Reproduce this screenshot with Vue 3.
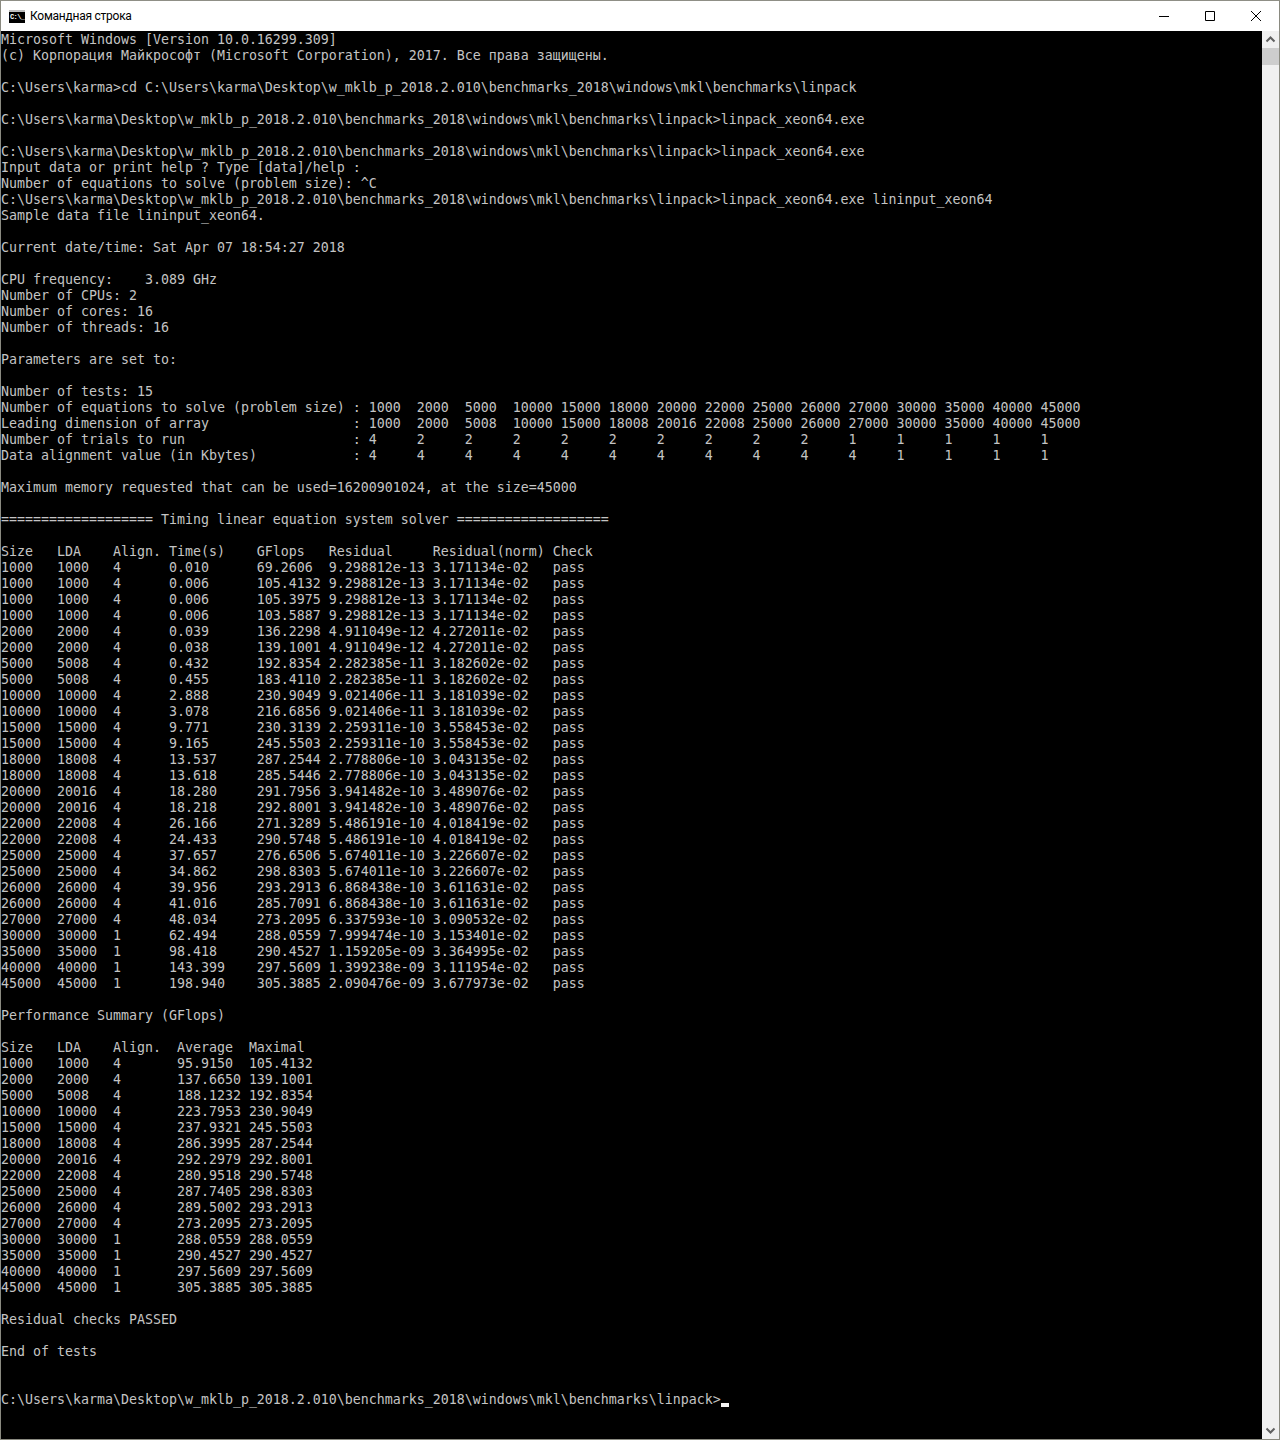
<script setup>
const promptPath = String.raw`C:\Users\karma\Desktop\w_mklb_p_2018.2.010\benchmarks_2018\windows\mkl\benchmarks\linpack>`

const tests = [
  ['1000', '1000', '4', '0.010', '69.2606', '9.298812e-13', '3.171134e-02'],
  ['1000', '1000', '4', '0.006', '105.4132', '9.298812e-13', '3.171134e-02'],
  ['1000', '1000', '4', '0.006', '105.3975', '9.298812e-13', '3.171134e-02'],
  ['1000', '1000', '4', '0.006', '103.5887', '9.298812e-13', '3.171134e-02'],
  ['2000', '2000', '4', '0.039', '136.2298', '4.911049e-12', '4.272011e-02'],
  ['2000', '2000', '4', '0.038', '139.1001', '4.911049e-12', '4.272011e-02'],
  ['5000', '5008', '4', '0.432', '192.8354', '2.282385e-11', '3.182602e-02'],
  ['5000', '5008', '4', '0.455', '183.4110', '2.282385e-11', '3.182602e-02'],
  ['10000', '10000', '4', '2.888', '230.9049', '9.021406e-11', '3.181039e-02'],
  ['10000', '10000', '4', '3.078', '216.6856', '9.021406e-11', '3.181039e-02'],
  ['15000', '15000', '4', '9.771', '230.3139', '2.259311e-10', '3.558453e-02'],
  ['15000', '15000', '4', '9.165', '245.5503', '2.259311e-10', '3.558453e-02'],
  ['18000', '18008', '4', '13.537', '287.2544', '2.778806e-10', '3.043135e-02'],
  ['18000', '18008', '4', '13.618', '285.5446', '2.778806e-10', '3.043135e-02'],
  ['20000', '20016', '4', '18.280', '291.7956', '3.941482e-10', '3.489076e-02'],
  ['20000', '20016', '4', '18.218', '292.8001', '3.941482e-10', '3.489076e-02'],
  ['22000', '22008', '4', '26.166', '271.3289', '5.486191e-10', '4.018419e-02'],
  ['22000', '22008', '4', '24.433', '290.5748', '5.486191e-10', '4.018419e-02'],
  ['25000', '25000', '4', '37.657', '276.6506', '5.674011e-10', '3.226607e-02'],
  ['25000', '25000', '4', '34.862', '298.8303', '5.674011e-10', '3.226607e-02'],
  ['26000', '26000', '4', '39.956', '293.2913', '6.868438e-10', '3.611631e-02'],
  ['26000', '26000', '4', '41.016', '285.7091', '6.868438e-10', '3.611631e-02'],
  ['27000', '27000', '4', '48.034', '273.2095', '6.337593e-10', '3.090532e-02'],
  ['30000', '30000', '1', '62.494', '288.0559', '7.999474e-10', '3.153401e-02'],
  ['35000', '35000', '1', '98.418', '290.4527', '1.159205e-09', '3.364995e-02'],
  ['40000', '40000', '1', '143.399', '297.5609', '1.399238e-09', '3.111954e-02'],
  ['45000', '45000', '1', '198.940', '305.3885', '2.090476e-09', '3.677973e-02'],
]

const summary = [
  ['1000', '1000', '4', '95.9150', '105.4132'],
  ['2000', '2000', '4', '137.6650', '139.1001'],
  ['5000', '5008', '4', '188.1232', '192.8354'],
  ['10000', '10000', '4', '223.7953', '230.9049'],
  ['15000', '15000', '4', '237.9321', '245.5503'],
  ['18000', '18008', '4', '286.3995', '287.2544'],
  ['20000', '20016', '4', '292.2979', '292.8001'],
  ['22000', '22008', '4', '280.9518', '290.5748'],
  ['25000', '25000', '4', '287.7405', '298.8303'],
  ['26000', '26000', '4', '289.5002', '293.2913'],
  ['27000', '27000', '4', '273.2095', '273.2095'],
  ['30000', '30000', '1', '288.0559', '288.0559'],
  ['35000', '35000', '1', '290.4527', '290.4527'],
  ['40000', '40000', '1', '297.5609', '297.5609'],
  ['45000', '45000', '1', '305.3885', '305.3885'],
]

const row = (cells, widths) =>
  cells.map((c, i) => (i < widths.length ? c.padEnd(widths[i]) : c)).join('')

const testWidths = [7, 7, 7, 11, 9, 13, 15]
const summaryWidths = [7, 7, 8, 9]

const output = [
  'Microsoft Windows [Version 10.0.16299.309]',
  '(c) Корпорация Майкрософт (Microsoft Corporation), 2017. Все права защищены.',
  '',
  String.raw`C:\Users\karma>cd C:\Users\karma\Desktop\w_mklb_p_2018.2.010\benchmarks_2018\windows\mkl\benchmarks\linpack`,
  '',
  promptPath + 'linpack_xeon64.exe',
  '',
  promptPath + 'linpack_xeon64.exe',
  'Input data or print help ? Type [data]/help :',
  'Number of equations to solve (problem size): ^C',
  promptPath + 'linpack_xeon64.exe lininput_xeon64',
  'Sample data file lininput_xeon64.',
  '',
  'Current date/time: Sat Apr 07 18:54:27 2018',
  '',
  'CPU frequency:    3.089 GHz',
  'Number of CPUs: 2',
  'Number of cores: 16',
  'Number of threads: 16',
  '',
  'Parameters are set to:',
  '',
  'Number of tests: 15',
  'Number of equations to solve (problem size) : 1000  2000  5000  10000 15000 18000 20000 22000 25000 26000 27000 30000 35000 40000 45000',
  'Leading dimension of array                  : 1000  2000  5008  10000 15000 18008 20016 22008 25000 26000 27000 30000 35000 40000 45000',
  'Number of trials to run                     : 4     2     2     2     2     2     2     2     2     2     1     1     1     1     1',
  'Data alignment value (in Kbytes)            : 4     4     4     4     4     4     4     4     4     4     4     1     1     1     1',
  '',
  'Maximum memory requested that can be used=16200901024, at the size=45000',
  '',
  '=================== Timing linear equation system solver ===================',
  '',
  row(['Size', 'LDA', 'Align.', 'Time(s)', 'GFlops', 'Residual', 'Residual(norm)', 'Check'], testWidths),
  ...tests.map((t) => row([...t, 'pass'], testWidths)),
  '',
  'Performance Summary (GFlops)',
  '',
  row(['Size', 'LDA', 'Align.', 'Average', 'Maximal'], summaryWidths),
  ...summary.map((s) => row(s, summaryWidths)),
  '',
  'Residual checks PASSED',
  '',
  'End of tests',
  '',
  '',
  promptPath,
].join('\n')
</script>

<template>
  <div class="window">
    <header class="titlebar">
      <div class="app-icon"><span class="app-icon-text">C:\_</span></div>
      <span class="title">Командная строка</span>
      <div class="controls">
        <svg class="ctl" width="46" height="30" viewBox="0 0 46 30"><path d="M18 15.5h10" stroke="#000" fill="none" /></svg>
        <svg class="ctl" width="46" height="30" viewBox="0 0 46 30"><path d="M18.5 10.5h9v9h-9z" stroke="#000" fill="none" /></svg>
        <svg class="ctl" width="46" height="30" viewBox="0 0 46 30"><path d="M18 10l10 10M28 10l-10 10" stroke="#000" fill="none" /></svg>
      </div>
    </header>
    <div class="body">
      <pre class="console">{{ output }}<span class="cursor"></span></pre>
      <aside class="scrollbar">
        <svg class="arrow" width="17" height="17" viewBox="0 0 17 17"><path d="M4.5 10.5l4-4 4 4" stroke="#606060" stroke-width="2" fill="none" /></svg>
        <div class="thumb"></div>
        <div class="track"></div>
        <svg class="arrow" width="17" height="17" viewBox="0 0 17 17"><path d="M4.5 6.5l4 4 4-4" stroke="#606060" stroke-width="2" fill="none" /></svg>
      </aside>
    </div>
  </div>
</template>

<style>
html, body { margin: 0; background: #fff; }
</style>

<style scoped>
.window {
  width: 1280px;
  height: 1440px;
  box-sizing: border-box;
  border: 1px solid #8a8a80;
  border-top-color: #8f8f86;
  display: flex;
  flex-direction: column;
  overflow: hidden;
}
.titlebar {
  height: 30px;
  flex: none;
  background: #fff;
  display: flex;
  align-items: center;
  padding-left: 8px;
}
.app-icon {
  width: 16px;
  height: 13px;
  background: #000;
  border-top: 2px solid #bdbdbd;
  box-sizing: border-box;
  overflow: hidden;
  display: flex;
  align-items: center;
}
.app-icon-text {
  color: #fff;
  font: 700 7px/1 "Liberation Mono", monospace;
  letter-spacing: -0.6px;
  margin-left: 1px;
}
.title {
  margin-left: 5px;
  font: 12px/16px Roboto, "Open Sans", sans-serif;
  letter-spacing: -0.25px;
  color: #000;
}
.controls {
  margin-left: auto;
  display: flex;
}
.ctl { display: block; }
.body {
  flex: 1;
  min-height: 0;
  display: flex;
  background: #000;
}
.console {
  flex: 1;
  margin: 0;
  padding: 1px 0 0;
  color: #c4c4c4;
  font: 13.29px/16px "DejaVu Sans Mono", monospace;
  white-space: pre;
  overflow: hidden;
}
.cursor {
  display: inline-block;
  width: 8px;
  height: 4px;
  background: #f2f2f2;
  vertical-align: -3px;
}
.scrollbar {
  width: 17px;
  flex: none;
  background: #f0f0f0;
  display: flex;
  flex-direction: column;
}
.arrow { display: block; flex: none; }
.thumb {
  height: 17px;
  flex: none;
  background: #cdcdcd;
}
.track { flex: 1; }
</style>
